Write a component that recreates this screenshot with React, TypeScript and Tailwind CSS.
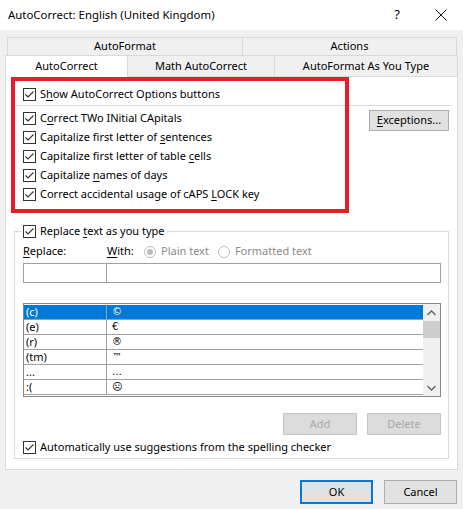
import React from 'react';

const font = { fontFamily: '"Noto Sans", "Open Sans", sans-serif' };

// Underlined access key letter, like a Windows dialog
const Key: React.FC<{ children: React.ReactNode }> = ({ children }) => (
  <span className="underline underline-offset-2">{children}</span>
);

const CheckBox: React.FC = () => (
  <div className="w-[13px] h-[13px] border border-[#333333] bg-white flex items-center justify-center shrink-0">
    <svg width="11" height="11" viewBox="0 0 11 11">
      <polyline points="1.5,5.5 4,8 9.5,2.5" fill="none" stroke="#333333" strokeWidth="1.1" />
    </svg>
  </div>
);

const CheckRow: React.FC<{ children: React.ReactNode }> = ({ children }) => (
  <div className="h-[19px] flex items-center gap-[4px]">
    <CheckBox />
    <span className="text-black">{children}</span>
  </div>
);

const Radio: React.FC<{ checked?: boolean; label: string }> = ({ checked, label }) => (
  <div className="flex items-center gap-[5px]">
    <div className="w-[12px] h-[12px] rounded-full border border-[#bcbcbc] bg-white flex items-center justify-center">
      {checked && <div className="w-[6px] h-[6px] rounded-full bg-[#bcbcbc]" />}
    </div>
    <span className="text-[#8a8a8a]">{label}</span>
  </div>
);

const ENTRIES: [string, string][] = [
  ['(c)', '©'],
  ['(e)', '€'],
  ['(r)', '®'],
  ['(tm)', '™'],
  ['...', '…'],
  [':(', '☹'],
];

const App: React.FC = () => {
  return (
    <div className="relative w-[463px] h-[509px] bg-[#f0f0f0] text-[11px] text-black overflow-hidden" style={font}>
      {/* Title bar */}
      <div className="h-[30px] bg-white flex items-center pl-[8px]">
        <span className="text-[11.4px]">AutoCorrect: English (United Kingdom)</span>
        <div className="ml-auto flex items-center">
          <span className="text-[13px] w-[44px] text-center">?</span>
          <div className="w-[44px] flex justify-center">
            <svg width="12" height="12" viewBox="0 0 12 12">
              <path d="M0.5 0.5 L11.5 11.5 M11.5 0.5 L0.5 11.5" stroke="#111" strokeWidth="1" />
            </svg>
          </div>
        </div>
      </div>

      <div className="px-[5px] pt-[7px]">
        {/* Tabs */}
        <div className="flex ml-[2px] h-[18px]">
          <div className="w-[236px] border border-b-0 border-[#d9d9d9] flex items-center justify-center">AutoFormat</div>
          <div className="w-[215px] -ml-px border border-b-0 border-[#d9d9d9] flex items-center justify-center">Actions</div>
        </div>
        <div className="flex items-end h-[21px]">
          <div className="relative z-10 w-[123px] h-[22px] -mb-px bg-white border border-b-0 border-[#d9d9d9] flex items-center justify-center">
            AutoCorrect
          </div>
          <div className="w-[148px] h-[21px] -ml-px border border-b-0 border-[#d9d9d9] flex items-center justify-center">
            Math AutoCorrect
          </div>
          <div className="w-[184px] h-[21px] -ml-px border border-b-0 border-[#d9d9d9] flex items-center justify-center">
            AutoFormat As You Type
          </div>
        </div>

        {/* Panel */}
        <div className="h-[394px] bg-white border border-[#d9d9d9] pt-[8px]">
          <div className="pl-[17px]">
            <CheckRow>
              S<Key>h</Key>ow AutoCorrect Options buttons
            </CheckRow>
          </div>
          <div className="ml-[10px] mr-[6px] mt-px h-px bg-[#d9d9d9]" />

          <div className="flex mt-[3px] pl-[17px]">
            <div className="flex flex-col">
              <CheckRow>
                C<Key>o</Key>rrect TWo INitial CApitals
              </CheckRow>
              <CheckRow>
                Capitalize first letter of <Key>s</Key>entences
              </CheckRow>
              <CheckRow>
                Capitalize first letter of table <Key>c</Key>ells
              </CheckRow>
              <CheckRow>
                Capitalize <Key>n</Key>ames of days
              </CheckRow>
              <CheckRow>
                Correct accidental usage of cAPS <Key>L</Key>OCK key
              </CheckRow>
            </div>
            <button className="ml-auto mr-[8px] mt-px w-[80px] h-[21px] bg-[#e1e1e1] border border-[#adadad] flex items-center justify-center">
              <span>
                <Key>E</Key>xceptions...
              </span>
            </button>
          </div>

          {/* Replace text group */}
          <div className="mt-[27px] mx-[8px] h-[228px] border border-[#d9d9d9]">
            <div className="-mt-[10px] ml-[6px] w-fit px-[2px] bg-white">
              <CheckRow>
                Replace <Key>t</Key>ext as you type
              </CheckRow>
            </div>

            <div className="mt-px h-[19px] flex items-center pl-[8px]">
              <span className="w-[84px]">
                <Key>R</Key>eplace:
              </span>
              <span className="w-[37px]">
                <Key>W</Key>ith:
              </span>
              <Radio checked label="Plain text" />
              <div className="ml-[9px]">
                <Radio label="Formatted text" />
              </div>
            </div>

            <div className="mt-[2px] flex pl-[8px]">
              <div className="w-[84px] h-[20px] border border-[#a0a0a0] bg-white" />
              <div className="w-[335px] h-[20px] -ml-px border border-[#a0a0a0] bg-white" />
            </div>

            {/* Entries list */}
            <div className="mt-[20px] ml-[8px] w-[418px] h-[94px] border border-[#828790] flex">
              <div className="flex-1 pt-px">
                {ENTRIES.map(([from, to], i) => (
                  <div
                    key={from}
                    className={`h-[15px] flex border-b border-[#a0a0a0] leading-[14px] overflow-hidden ${
                      i === 0 ? 'bg-[#0078d7] text-white' : 'text-black'
                    }`}
                  >
                    <div className="w-[83px] pl-[2px] border-r border-[#a0a0a0]">{from}</div>
                    <div className="flex-1 pl-[5px]" style={{ fontFamily: '"DejaVu Sans", sans-serif', fontSize: '10px' }}>
                      {to}
                    </div>
                  </div>
                ))}
              </div>
              <div className="w-[17px] bg-[#f0f0f0] flex flex-col">
                <div className="h-[17px] flex items-center justify-center">
                  <svg width="9" height="6" viewBox="0 0 9 6">
                    <polyline points="0.5,5 4.5,1 8.5,5" fill="none" stroke="#606060" strokeWidth="1.3" />
                  </svg>
                </div>
                <div className="h-[17px] bg-[#cdcdcd]" />
                <div className="flex-1" />
                <div className="h-[17px] flex items-center justify-center">
                  <svg width="9" height="6" viewBox="0 0 9 6">
                    <polyline points="0.5,1 4.5,5 8.5,1" fill="none" stroke="#606060" strokeWidth="1.3" />
                  </svg>
                </div>
              </div>
            </div>

            <div className="mt-[16px] mr-[7px] flex justify-end gap-[10px]">
              <button className="w-[74px] h-[22px] bg-[#dcdcdc] border border-[#c4c4c4] text-[#a8a8a8]">Add</button>
              <button className="w-[74px] h-[22px] bg-[#dcdcdc] border border-[#c4c4c4] text-[#a8a8a8]">Delete</button>
            </div>

            <div className="mt-[3px] pl-[8px]">
              <CheckRow>Automatically use suggestions from the spelling checker</CheckRow>
            </div>
          </div>
        </div>

        {/* Footer buttons */}
        <div className="mt-[10px] flex justify-end gap-[11px] pr-px">
          <button className="w-[73px] h-[24px] bg-[#e1e1e1] border-2 border-[#0078d7]">OK</button>
          <button className="w-[73px] h-[24px] bg-[#e1e1e1] border border-[#adadad]">Cancel</button>
        </div>
      </div>

      {/* Red highlight annotation */}
      <div className="absolute left-[11px] top-[77px] w-[338px] h-[136px] border-4 border-[#ec1c24] pointer-events-none" />
    </div>
  );
};

export default App;
